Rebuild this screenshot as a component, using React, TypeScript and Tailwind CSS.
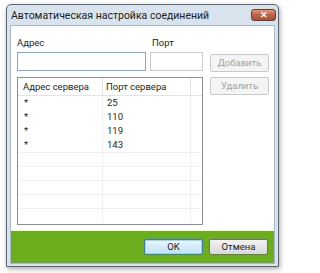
import React from "react";

const font = { fontFamily: 'Roboto, "Liberation Sans", Arial, sans-serif' };

export default function App() {
  const rows = [
    ["*", "25"],
    ["*", "110"],
    ["*", "119"],
    ["*", "143"],
  ];
  const empty = [0, 1, 2, 3, 4];
  return (
    <div className="w-[285px] h-[273px] bg-white overflow-hidden pt-[4px] pl-[6px]" style={font}>
      <div className="w-[273px] h-[263px] border border-[#5b6673] bg-[#d9e3ee] rounded-t-[5px] shadow-[1px_2px_5px_rgba(0,0,0,0.35)] flex flex-col">
        <div className="h-[20px] flex justify-between items-start pl-[4px] pr-[2px]">
          <span className="text-[10.5px] leading-[20px] text-[#1b1b1b] mt-[1px]">Автоматическая настройка соединений</span>
          <div className="mt-[4px] w-[25px] h-[12px] rounded-[3px] border border-[#6b3a2a] bg-gradient-to-b from-[#d99a83] via-[#b8634a] to-[#a84f35] flex items-center justify-center">
            <span className="text-white text-[9px] font-bold leading-none">✕</span>
          </div>
        </div>
        <div className="mx-[3px] flex-1 flex flex-col border border-[#a9b8c8] bg-white">
          <div className="flex-1 flex flex-col pl-[6px] text-[9.5px] text-[#1e1e1e]">
            <div className="flex mt-[10px] h-[14px] leading-[14px]">
              <span className="w-[135px]">Адрес</span>
              <span>Порт</span>
            </div>
            <div className="flex mt-[2px] items-start">
              <div className="w-[129px] h-[19px] border border-[#7aa8d8] bg-white"></div>
              <div className="ml-[4px] w-[53px] h-[19px] border border-[#c9cdd3] bg-white"></div>
              <div className="ml-[7px] mt-[2px] w-[59px] h-[18px] border border-[#c7c9cc] rounded-[2px] bg-[#f4f4f4] text-[#a3a3a3] flex items-center justify-center">Добавить</div>
            </div>
            <div className="flex mt-[5px] items-start">
              <div className="w-[186px] h-[148px] border border-[#8a9098] bg-white flex flex-col overflow-hidden">
                <div className="h-[18px] flex border-b border-[#e3e3e3] leading-[17px]">
                  <div className="w-[85px] pl-[5px] border-r border-[#e3e3e3]">Адрес сервера</div>
                  <div className="w-[88px] pl-[3px] border-r border-[#e3e3e3]">Порт сервера</div>
                  <div className="flex-1"></div>
                </div>
                {rows.map((r, i) => (
                  <div key={i} className="h-[14px] flex leading-[14px]">
                    <div className="w-[85px] pl-[6px] border-r border-[#f0f0f0]">{r[0]}</div>
                    <div className="w-[88px] pl-[4px] border-r border-[#f0f0f0]">{r[1]}</div>
                    <div className="flex-1"></div>
                  </div>
                ))}
                {empty.map((i) => (
                  <div key={"e" + i} className="h-[14px] flex border-t border-[#f0f0f0]">
                    <div className="w-[85px] border-r border-[#f0f0f0]"></div>
                    <div className="w-[88px] border-r border-[#f0f0f0]"></div>
                    <div className="flex-1"></div>
                  </div>
                ))}
              </div>
              <div className="ml-[7px] w-[59px] h-[18px] border border-[#c7c9cc] rounded-[2px] bg-[#f4f4f4] text-[#a3a3a3] flex items-center justify-center">Удалить</div>
            </div>
          </div>
          <div className="h-[32px] bg-[#6cad1d] flex justify-end items-center pr-[6px] gap-[6px] text-[9.5px] text-[#1e1e1e]">
            <div className="w-[59px] h-[16px] rounded-[2px] border border-[#3d7bad] bg-gradient-to-b from-[#eaf6fd] to-[#bfe2f5] shadow-[inset_0_0_0_1px_#9fd3f0] flex items-center justify-center">OK</div>
            <div className="w-[59px] h-[16px] rounded-[2px] border border-[#707070] bg-gradient-to-b from-[#f3f3f3] to-[#d9d9d9] flex items-center justify-center">Отмена</div>
          </div>
        </div>
        <div className="h-[2px]"></div>
      </div>
    </div>
  );
}
